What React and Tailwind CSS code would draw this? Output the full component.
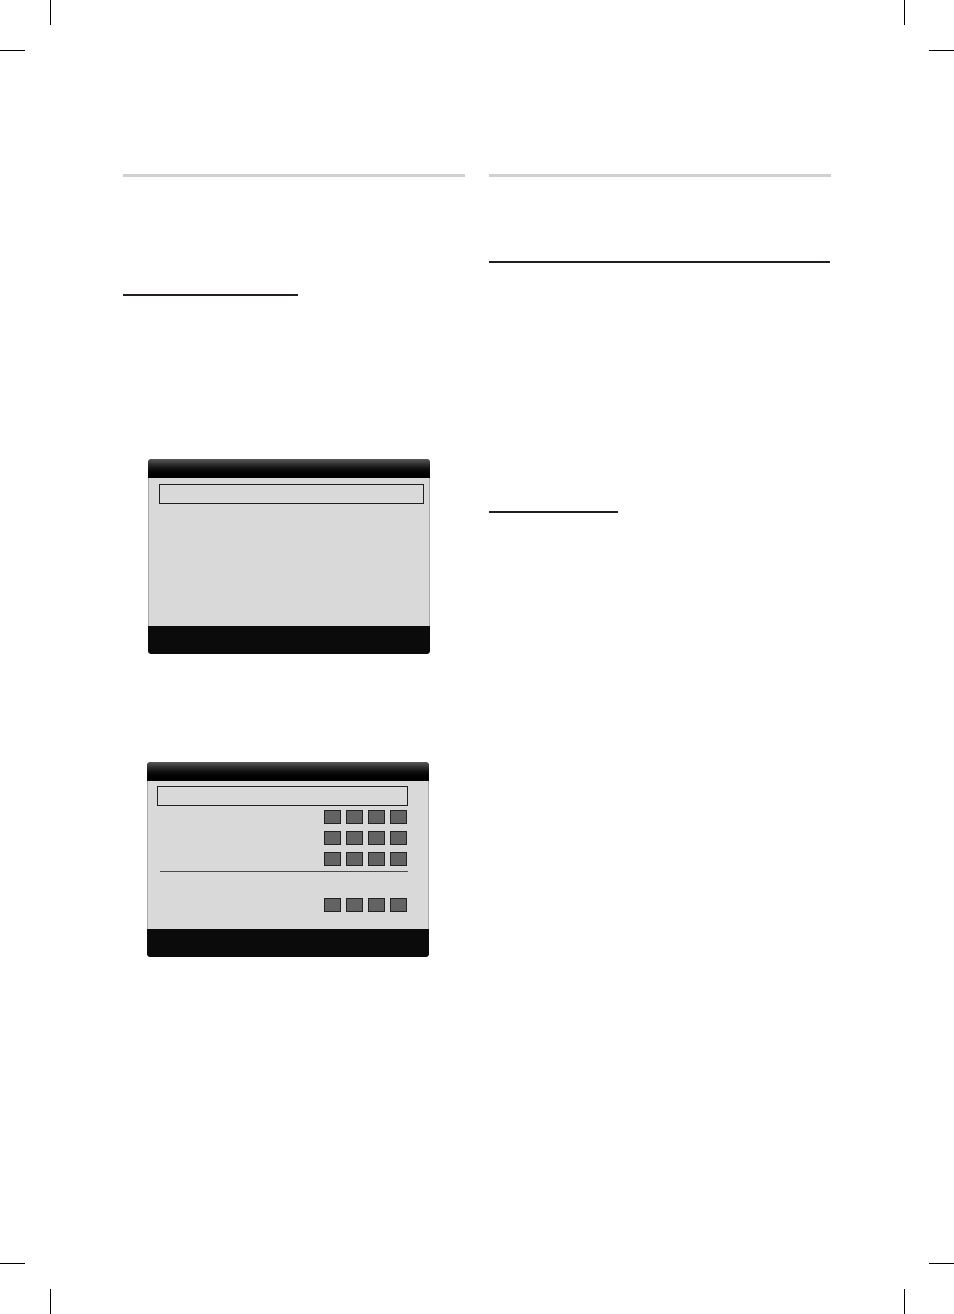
// Manual page: two columns with section rules and two on-screen dialog mockups
function CropMarks() {
  return (
    <>
      <div className="absolute left-[50px] top-0 h-[25px] w-px bg-black" />
      <div className="absolute left-0 top-[50px] h-px w-[25px] bg-black" />
      <div className="absolute left-[904px] top-0 h-[25px] w-px bg-black" />
      <div className="absolute left-[929px] top-[50px] h-px w-[25px] bg-black" />
      <div className="absolute left-[50px] top-[1289px] h-[25px] w-px bg-black" />
      <div className="absolute left-0 top-[1263px] h-px w-[25px] bg-black" />
      <div className="absolute left-[904px] top-[1289px] h-[25px] w-px bg-black" />
      <div className="absolute left-[929px] top-[1263px] h-px w-[25px] bg-black" />
    </>
  );
}

function Squares() {
  return (
    <div className="flex gap-[5px]">
      {[0, 1, 2, 3].map((i) => (
        <div key={i} className="h-[14px] w-[17px] border border-[#222] bg-[#636363]" />
      ))}
    </div>
  );
}

function Dialog({ children }) {
  return (
    <div className="flex h-[195px] w-[282px] flex-col overflow-hidden rounded-[4px] bg-[#0b0b0b]">
      <div className="h-[19px] bg-gradient-to-b from-[#5a5a5a] via-[#111] to-[#000]" />
      <div className="h-[148px] border-x border-[#a8a8a8] bg-[#d9d9d9]">{children}</div>
      <div className="flex-1 bg-[#0b0b0b]" />
    </div>
  );
}

export default function App() {
  return (
    <div className="relative h-[1314px] w-[954px] bg-white font-['Liberation_Sans',sans-serif]">
      <CropMarks />
      <div className="flex gap-[24px] pl-[123px] pt-[174px]">
        {/* left column */}
        <div className="flex w-[342px] flex-col">
          <div className="h-[3px] w-full bg-[#d1d1d1]" />
          <div className="mt-[117px] h-[2px] w-[175px] bg-[#231f20]" />
          <div className="ml-[25px] mt-[163px]">
            <Dialog>
              <div className="ml-[10px] mt-[6px] h-[20px] w-[265px] border-[1.5px] border-[#1e1e1e]" />
            </Dialog>
          </div>
          <div className="ml-[24px] mt-[108px]">
            <Dialog>
              <div className="flex flex-col pl-[9px] pr-[21px] pt-[5px]">
                <div className="h-[20px] w-[251px] border-[1.5px] border-[#1e1e1e]" />
                <div className="mt-[4px] flex flex-col items-end gap-[7px]">
                  <Squares />
                  <Squares />
                  <Squares />
                </div>
                <div className="ml-[3px] mt-[5px] h-px w-[248px] bg-[#4a4a4a]" />
                <div className="mt-[26px] flex justify-end">
                  <Squares />
                </div>
              </div>
            </Dialog>
          </div>
        </div>
        {/* right column */}
        <div className="flex w-[342px] flex-col">
          <div className="h-[3px] w-full bg-[#d1d1d1]" />
          <div className="mt-[84px] h-[2px] w-[341px] bg-[#231f20]" />
          <div className="mt-[248px] h-[2px] w-[129px] bg-[#231f20]" />
        </div>
      </div>
    </div>
  );
}
